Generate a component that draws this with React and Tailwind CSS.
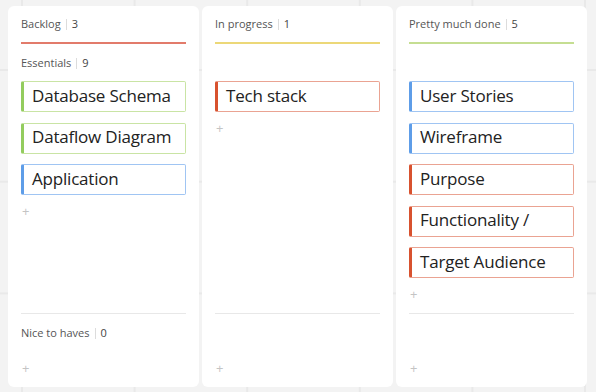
import React from 'react'

// ─── Board data ───────────────────────────────────────────────────────────────
const TONES = {
  green: 'border-[color:#c9e4a4] border-l-[color:#93cc5e]',
  blue: 'border-[color:#a0c5f3] border-l-[color:#5e9de8]',
  red: 'border-[color:#eaa392] border-l-[color:#d8522f]',
}

const COLUMNS = [
  {
    title: 'Backlog',
    count: 3,
    line: 'border-[#e27b6b]',
    group: { title: 'Essentials', count: 9 },
    cards: [
      { text: 'Database Schema', tone: 'green' },
      { text: 'Dataflow Diagram', tone: 'green' },
      { text: 'Application', tone: 'blue' },
    ],
    nice: { title: 'Nice to haves', count: 0 },
  },
  {
    title: 'In progress',
    count: 1,
    line: 'border-[#ecd878]',
    cards: [{ text: 'Tech stack', tone: 'red' }],
  },
  {
    title: 'Pretty much done',
    count: 5,
    line: 'border-[#c5de92]',
    cards: [
      { text: 'User Stories', tone: 'blue' },
      { text: 'Wireframe', tone: 'blue' },
      { text: 'Purpose', tone: 'red' },
      { text: 'Functionality /', tone: 'red' },
      { text: 'Target Audience', tone: 'red' },
    ],
  },
]

function Label({ title, count }) {
  return (
    <div className="flex items-center text-[11px] leading-4 text-[#555]">
      <span>{title}</span>
      <span className="mx-[5px] h-[11px] w-px bg-[#dcdcdc]" />
      <span className="text-[#444]">{count}</span>
    </div>
  )
}

function Plus() {
  return <div className="text-[13px] leading-4 text-[#c4c4c4] pl-px">+</div>
}

function Card({ text, tone }) {
  return (
    <div
      className={`flex h-[31px] items-center rounded-[2px] border border-l-[length:3px] bg-white pb-[2px] pl-[8px] text-[17px] leading-6 tracking-[-0.2px] text-[#222] ${TONES[tone]}`}
    >
      {text}
    </div>
  )
}

function Column({ col }) {
  return (
    <div className="flex h-[381px] w-[191px] flex-col rounded-md bg-white px-[13px]">
      {/* header */}
      <div className={`border-b-2 pb-[10px] pt-[10px] ${col.line}`}>
        <Label title={col.title} count={col.count} />
      </div>

      {/* main swimlane */}
      <div className="h-[270px] border-b border-[#e8e8e8]">
        <div className="h-[37px] pt-[11px]">
          {col.group && <Label title={col.group.title} count={col.group.count} />}
        </div>
        <div className="flex flex-col gap-[10.5px]">
          {col.cards.map(c => (
            <Card key={c.text} {...c} />
          ))}
        </div>
        <div className="mt-[8px]">
          <Plus />
        </div>
      </div>

      {/* second swimlane */}
      <div className="h-[11px]" />
      <div className="h-[16px]">{col.nice && <Label title={col.nice.title} count={col.nice.count} />}</div>
      <div className="mt-[19px]">
        <Plus />
      </div>
    </div>
  )
}

export default function App() {
  return (
    <div
      className="flex h-[392px] w-[596px] gap-[3px] overflow-hidden bg-[#f3f3f3] bg-[linear-gradient(to_right,#e9e9e9_2px,transparent_2px),linear-gradient(to_bottom,#e9e9e9_2px,transparent_2px)] bg-[size:112.6px_111.7px] bg-[position:21px_69px] pl-2 pt-[6px]"
      style={{ fontFamily: '"Open Sans", "Noto Sans", sans-serif' }}
    >
      {COLUMNS.map(col => (
        <Column key={col.title} col={col} />
      ))}
    </div>
  )
}
